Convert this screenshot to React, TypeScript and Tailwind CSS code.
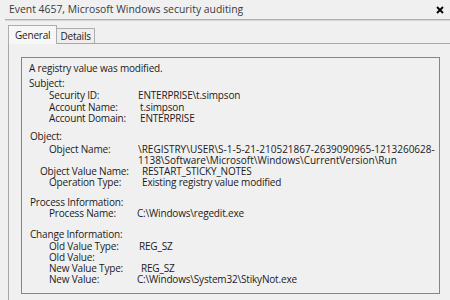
import React from "react";

export default function App() {
  const font = { fontFamily: '"Open Sans", "Noto Sans", sans-serif' };
  return (
    <div
      className="w-[450px] h-[300px] bg-[#f0f0f0] overflow-hidden flex flex-col text-[#1b1b1b]"
      style={font}
    >
      {/* title bar */}
      <div className="h-[19px] flex items-center justify-between pl-[9px] pr-[5px]">
        <span className="text-[10.4px] text-[#3a3a3a] leading-none">
          Event 4657, Microsoft Windows security auditing
        </span>
        <svg width="8" height="8" viewBox="0 0 8 8" className="mr-[1px]">
          <path d="M1 1 L7 7 M7 1 L1 7" stroke="#000" strokeWidth="1.8" />
        </svg>
      </div>
      <div className="ml-[5px] h-[2px] bg-[#b0b0b0] border-b border-[#d6d6d6]" />

      {/* tabs */}
      <div className="h-[22px] flex items-end pl-[8px] tracking-[-0.2px]">
        <div className="relative z-10 mb-[-1px] h-[19px] border-x border-t border-[#adadad] bg-[#f7f7f7] px-[6px] flex items-center text-[10px] leading-none">
          General
        </div>
        <div className="h-[15px] border-t border-r border-[#adadad] bg-[#eeeeee] px-[3px] flex items-center text-[10px] leading-none">
          Details
        </div>
      </div>

      {/* pane */}
      <div className="flex-1 ml-[8px] border-t border-l border-[#a8a8a8] pt-[13px] pl-[12px]">
        <div className="w-[419px] h-[237px] border border-[#858585] pt-[5px] pl-[7px] text-[10px] leading-[11px] whitespace-nowrap tracking-[-0.18px]">
          <div>A registry value was modified.</div>

          <div className="mt-[3.5px]">Subject:</div>
          <div className="flex mt-[1px]">
            <div className="w-[109px] pl-[20px] shrink-0">Security ID:</div>
            <div>ENTERPRISE\t.simpson</div>
          </div>
          <div className="flex mt-[1px]">
            <div className="w-[111px] pl-[20px] shrink-0">Account Name:</div>
            <div>t.simpson</div>
          </div>
          <div className="flex mt-[0.5px]">
            <div className="w-[111px] pl-[20px] shrink-0">Account Domain:</div>
            <div>ENTERPRISE</div>
          </div>

          <div className="mt-[7px] pl-[1px]">Object:</div>
          <div className="flex mt-[2px]">
            <div className="w-[109px] pl-[20px] shrink-0">Object Name:</div>
            <div className="tracking-normal">
              <div>\REGISTRY\USER\S-1-5-21-210521867-2639090965-1213260628-</div>
              <div>1138\Software\Microsoft\Windows\CurrentVersion\Run</div>
            </div>
          </div>
          <div className="flex">
            <div className="w-[113px] pl-[11px] shrink-0">Object Value Name:</div>
            <div>RESTART_STICKY_NOTES</div>
          </div>
          <div className="flex">
            <div className="w-[113px] pl-[20px] shrink-0">Operation Type:</div>
            <div>Existing registry value modified</div>
          </div>

          <div className="mt-[9px] pl-[1px]">Process Information:</div>
          <div className="flex">
            <div className="w-[108px] pl-[20px] shrink-0">Process Name:</div>
            <div>C:\Windows\regedit.exe</div>
          </div>

          <div className="mt-[10px] pl-[1px]">Change Information:</div>
          <div className="flex mt-[1px]">
            <div className="w-[110px] pl-[20px] shrink-0">Old Value Type:</div>
            <div>REG_SZ</div>
          </div>
          <div className="flex">
            <div className="w-[110px] pl-[20px] shrink-0">Old Value:</div>
            <div></div>
          </div>
          <div className="flex">
            <div className="w-[112px] pl-[20px] shrink-0">New Value Type:</div>
            <div>REG_SZ</div>
          </div>
          <div className="flex">
            <div className="w-[108px] pl-[20px] shrink-0">New Value:</div>
            <div>C:\Windows\System32\StikyNot.exe</div>
          </div>
        </div>
      </div>
    </div>
  );
}
